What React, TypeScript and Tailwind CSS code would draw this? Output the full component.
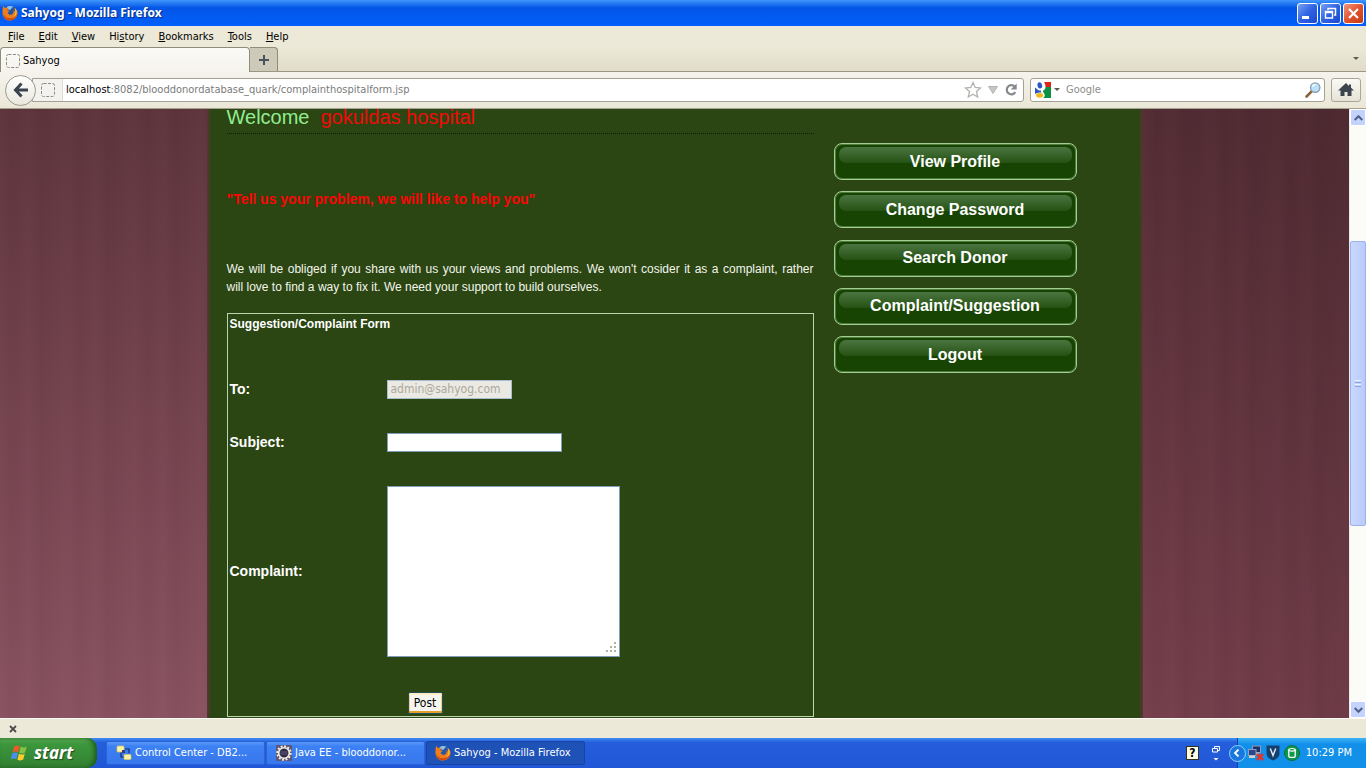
import type { ReactNode } from "react";

const UI = "font-['DejaVu_Sans_Condensed','DejaVu_Sans',sans-serif]";

function FirefoxIcon() {
  return (
    <svg viewBox="0 0 16 16" className="size-4 shrink-0" aria-hidden="true">
      <circle cx="8.2" cy="7.6" r="6.9" fill="#2456a4" />
      <path d="M4.500 2.500c2-2 5.500-1.800 7.200-.6-1.400 0-2.400 1.200-2.800 2.700-1.700.6-3.400-.1-4.400-2.100z" fill="#8ec0ea" />
      <path
        d="M1.400 .8C1.800 2 2.600 2.700 3.400 3c1.100-.4 2.200-.2 3 .4-.8.500-1 1.300-.8 2l1.900.3c0 .8-1.100 1.100-1.700 1.600-.1 1.900 1.700 3 3.600 2.400 1.900-.6 2.800-2.500 2-4.600 1 .5 1.400 1.400 1.500 2.200.5-1.700 0-3.600-1-4.700 2.400 1.200 3.800 3.400 3.600 6-.3 4-3.500 7-7.500 7S.7 12.400.5 8.400C.4 5.700.6 2.600 1.400.8z"
        fill="#ee7d1c"
      />
      <path d="M1.300 8.500c.8 2.800 3.300 4.800 6.700 4.800 3.400 0 6-2.200 6.900-5 .2 4-3.100 7-6.900 7-4.200 0-7-3-6.700-6.800z" fill="#cf4a10" />
      <path d="M12.900 3.200c1.700 1.600 2.300 4 1.300 6.200-.7 1.600-1.800 2.500-3 3 2-1.800 2.800-5.600 1.700-9.200z" fill="#fcc32c" />
    </svg>
  );
}

function BlankIcon() {
  return (
    <svg viewBox="0 0 16 16" className="size-4 shrink-0" aria-hidden="true">
      <rect x="1.500" y="1.500" width="13" height="13" rx="2" fill="none" stroke="#8a8a86" strokeDasharray="3 1.500" />
    </svg>
  );
}

function GoogleIcon() {
  return (
    <svg viewBox="0 0 16 16" className="size-4 shrink-0" aria-hidden="true">
      <rect width="16" height="16" fill="#fff" />
      <path d="M9 0h7v5h-5.500C10.600 3 10 1.300 9 0z" fill="#e2231a" />
      <path d="M16 5v11H8c1.800-1 2.400-3 1.200-4.600C8.300 10 7.500 9.600 8 8.800 9.700 8 10.600 6.600 10.500 5z" fill="#0b9144" />
      <path d="M0 5.500 2 7c1 1.200 2.500 1.700 4 1.500-.3.800 0 1.400.4 1.900-2.300 0-4.400.4-6.400 1.600z" fill="#2a56c6" />
      <ellipse cx="4.800" cy="3.400" rx="2.300" ry="3.200" transform="rotate(-12 4.800 3.400)" fill="#2a56c6" />
      <ellipse cx="4.600" cy="13.300" rx="3.500" ry="2.400" fill="#f4b81c" />
    </svg>
  );
}

function EclipseIcon() {
  return (
    <svg viewBox="0 0 16 16" className="size-4 shrink-0" aria-hidden="true">
      <rect width="16" height="16" rx="1" fill="#5b5674" />
      <circle cx="8" cy="8" r="6.700" fill="none" stroke="#f3efe6" strokeWidth="2" strokeDasharray="1.900 1.600" />
      <circle cx="8" cy="8" r="5.300" fill="#2f2b45" stroke="#f3efe6" strokeWidth="1.600" />
      <path d="M4.500 7h7M4.500 9h7" stroke="#6d6990" strokeWidth=".8" />
    </svg>
  );
}

function ControlCenterIcon() {
  return (
    <svg viewBox="0 0 16 16" className="size-4 shrink-0" aria-hidden="true">
      <path d="M5 6v6h4M9 4h4v4" fill="none" stroke="#1b2b6b" strokeWidth="1.200" />
      <rect x="1" y="1" width="7" height="6" rx="1" fill="#fbf3a5" stroke="#d9c65a" strokeWidth=".7" />
      <rect x="8" y="9.500" width="7" height="5" rx="1" fill="#fbf3a5" stroke="#d9c65a" strokeWidth=".7" />
      <rect x="6" y="5" width="3" height="3" fill="#3b3b7a" />
    </svg>
  );
}

function WindowsFlag() {
  return (
    <svg viewBox="0 0 20 18" className="h-[18px] w-5 shrink-0" aria-hidden="true">
      <path d="M4.200 2.600C6 1.200 8 1.300 9.700 2.300L8.200 8.200C6.500 7.200 4.400 7.200 2.600 8.400z" fill="#ee5a2b" />
      <path d="M10.700 2.800c1.900 1 4 1 6-.2l-1.600 6c-1.900 1.100-4 1.100-5.900.2z" fill="#85c440" />
      <path d="M2.300 9.500C4 8.300 6.200 8.300 7.900 9.300L6.400 15C4.700 14.200 2.600 14.200.8 15.300z" fill="#4a8ff0" />
      <path d="M8.900 9.800c1.900 1 4 1 5.900-.1l-1.600 5.900c-1.800 1.100-3.900 1-5.800.1z" fill="#fccd2d" />
    </svg>
  );
}

function TitleButton({ label, close, children }: { label: string; close?: boolean; children: ReactNode }) {
  return (
    <button
      aria-label={label}
      className={
        close
          ? "flex size-[21px] items-center justify-center rounded-[3px] border border-white bg-linear-to-br from-[#f0957a] via-[#e0532c] to-[#c63a12]"
          : "flex size-[21px] items-center justify-center rounded-[3px] border border-white bg-linear-to-br from-[#7aa0f0] via-[#2f62e4] to-[#1c48d0]"
      }
    >
      <svg viewBox="0 0 19 19" className="size-[19px]" fill="none" stroke="#fff" aria-hidden="true">
        {children}
      </svg>
    </button>
  );
}

function TitleBar() {
  return (
    <header className="flex h-[26px] shrink-0 items-center bg-linear-to-b from-[#3f96fb] via-[#0355e6] via-30% to-[#0260fc] pr-0.5 pl-0.5">
      <FirefoxIcon />
      <h1 className="ml-[3px] flex-1 font-['Noto_Sans',sans-serif] text-[12px] font-bold text-white [text-shadow:1px_1px_1px_#0a2a80]">
        Sahyog - Mozilla Firefox
      </h1>
      <div className="flex gap-0.5">
        <TitleButton label="Minimize">
          <path d="M4 13.500h7" strokeWidth="3" />
        </TitleButton>
        <TitleButton label="Restore">
          <path d="M7 6V4.500h7.500V11H13" strokeWidth="1.500" />
          <path d="M4.500 7.500h7v6.500h-7zM4.500 8.500h7" strokeWidth="1.400" />
        </TitleButton>
        <TitleButton label="Close" close>
          <path d="m5 5 9 9M14 5l-9 9" strokeWidth="2.200" />
        </TitleButton>
      </div>
    </header>
  );
}

const menus = [
  ["", "F", "ile"],
  ["", "E", "dit"],
  ["", "V", "iew"],
  ["Hi", "s", "tory"],
  ["", "B", "ookmarks"],
  ["", "T", "ools"],
  ["", "H", "elp"],
];

function MenuBar() {
  return (
    <nav className="flex h-[21px] shrink-0 items-center gap-3.5 bg-[#ece9d8] pl-2" aria-label="Menu bar">
      {menus.map(([before, key, after]) => (
        <button key={key + after} className="leading-[14px]">
          {before}
          <span className="underline">{key}</span>
          {after}
        </button>
      ))}
    </nav>
  );
}

function TabStrip() {
  return (
    <div className="flex h-[25px] shrink-0 items-stretch border-b border-[#9a9784] bg-linear-to-b from-[#ece9d8] to-[#e0dcc9]">
      <div className="-mb-px flex w-[250px] items-center gap-[2px] rounded-t-[4px] border border-b-0 border-[#8f8c7b] bg-linear-to-b from-[#fbfaf6] to-[#f5f3ec] pt-[2px] pl-1">
        <BlankIcon />
        <span>Sahyog</span>
      </div>
      <button
        aria-label="New tab"
        className="flex w-7 items-center justify-center rounded-tr-[4px] border border-b-0 border-l-0 border-[#8f8c7b] bg-[#cdcab9]"
      >
        <svg viewBox="0 0 10 10" className="size-[10px]" stroke="#46525c" strokeWidth="2" aria-hidden="true">
          <path d="M5 0v10M0 5h10" />
        </svg>
      </button>
      <div className="flex flex-1 items-center justify-end pr-[7px]">
        <button aria-label="List all tabs">
          <svg viewBox="0 0 6 4" className="h-1 w-1.5" fill="#5c5a4f" aria-hidden="true">
            <path d="M0 0h6L3 3z" />
          </svg>
        </button>
      </div>
    </div>
  );
}

function NavBar() {
  return (
    <div className="flex h-[37px] shrink-0 items-center border-b border-[#a5a28f] bg-linear-to-b from-[#f5f3ec] to-[#ebe7d7] pr-[5px] pl-[5px]">
      <button
        aria-label="Back"
        className="z-10 flex size-[31px] shrink-0 items-center justify-center rounded-full border border-[#9d9b8e] bg-linear-to-b from-white to-[#e9e7dd]"
      >
        <svg viewBox="0 0 16 16" className="size-4" fill="none" stroke="#39444d" strokeWidth="3" aria-hidden="true">
          <path d="M8.500 1.500 2.500 8l6 6.500M3 8h12" />
        </svg>
      </button>
      <div className="-ml-1 flex h-6 min-w-0 flex-1 items-center rounded-r-[3px] border border-[#a3a192] bg-white">
        <div className="flex h-full w-[30px] shrink-0 items-center justify-end border-r border-[#dcdad2] bg-[#f3f2ee] pr-[6px]">
          <BlankIcon />
        </div>
        <div className="grid min-w-0 flex-1 items-center">
          <input
            aria-label="Address"
            defaultValue="localhost:8082/blooddonordatabase_quark/complainthospitalform.jsp"
            className="col-start-1 row-start-1 w-full bg-transparent pl-[3px] text-transparent outline-none"
          />
          <span aria-hidden="true" className="pointer-events-none col-start-1 row-start-1 truncate pl-[3px] text-[#7b7b7b]">
            <span className="text-black">localhost</span>:8082/blooddonordatabase_quark/complainthospitalform.jsp
          </span>
        </div>
        <div className="flex items-center gap-1.5 pr-[5px]">
          <button aria-label="Bookmark this page">
            <svg viewBox="0 0 18 18" className="size-[18px]" fill="#fff" stroke="#b1b1ad" strokeWidth="1.300" aria-hidden="true">
              <path d="m9 1.500 2.200 5 5.300.5-4 3.600 1.200 5.400L9 13.200 4.300 16l1.200-5.400-4-3.600 5.300-.5z" />
            </svg>
          </button>
          <button aria-label="History">
            <svg viewBox="0 0 10 8" className="h-2 w-[10px]" fill="#c6c6c3" stroke="#b4b4b0" aria-hidden="true">
              <path d="M.5.500h9L5 7.500z" />
            </svg>
          </button>
          <button aria-label="Reload">
            <svg viewBox="0 0 14 14" className="size-[14px]" fill="none" stroke="#85898b" strokeWidth="2.200" aria-hidden="true">
              <path d="M10.700 3.600A4.600 4.600 0 1 0 11.300 9.200" />
              <path d="M12.700.5v6H6.700z" fill="#85898b" stroke="none" />
            </svg>
          </button>
        </div>
      </div>
      <div className="ml-[6px] flex h-6 w-[295px] shrink-0 items-center rounded-[3px] border border-[#a3a192] bg-white pr-[3px] pl-1">
        <GoogleIcon />
        <svg viewBox="0 0 6 4" className="ml-[3px] h-1 w-1.5" fill="#5c5a4f" aria-hidden="true">
          <path d="M0 0h6L3 3z" />
        </svg>
        <input aria-label="Search" placeholder="Google" className="ml-1.5 min-w-0 flex-1 outline-none placeholder:text-[#8e8e8a]" />
        <button aria-label="Run search">
          <svg viewBox="0 0 16 16" className="size-4" aria-hidden="true">
            <path d="m6.600 9.400-5 5.100" stroke="#8d6136" strokeWidth="2.600" strokeLinecap="round" />
            <circle cx="10.200" cy="5.600" r="4.700" fill="#b9e1fa" stroke="#8a9cae" strokeWidth="1.300" />
            <path d="M7.600 5a2.800 2.800 0 0 1 3-2.300" fill="none" stroke="#fff" strokeWidth="1.200" />
          </svg>
        </button>
      </div>
      <button
        aria-label="Home"
        className="ml-[6px] flex h-6 w-[30px] shrink-0 items-center justify-center rounded-[3px] border border-[#a8a698] bg-linear-to-b from-[#faf9f5] to-[#e6e3d6]"
      >
        <svg viewBox="0 0 16 16" className="size-4" fill="#3c454d" aria-hidden="true">
          <path d="M8 1 0 8.500h2.500V14h4v-4h3v4h4V8.500H16L13 5.700V2.500h-2v1.400z" />
        </svg>
      </button>
    </div>
  );
}

const actions = ["View Profile", "Change Password", "Search Donor", "Complaint/Suggestion", "Logout"];

function SideMenu() {
  return (
    <nav className="flex h-[230px] w-[243px] flex-col justify-between" aria-label="Hospital menu">
      {actions.map((name) => (
        <a
          key={name}
          href="#"
          className="relative flex h-[37px] items-center justify-center rounded-[8px] border border-[#a3cd92] bg-[#174402] text-[16px] font-bold text-white shadow-[inset_0_0_0_1px_#4d7c3a]"
        >
          <span className="absolute inset-x-[4px] top-[3px] h-[16px] rounded-[7px] bg-linear-to-b from-[#4b7540] to-[#255212]" />
          <span className="relative">{name}</span>
        </a>
      ))}
    </nav>
  );
}

function ComplaintForm() {
  return (
    <form
      className="mt-[17px] border border-[#bcd3ab] pb-[2px] pl-[2px] text-[14px] leading-[19px] font-bold text-white"
      onSubmit={(e) => e.preventDefault()}
    >
      <h3 className="text-[12px] leading-[20px]">Suggestion/Complaint Form</h3>
      <div className="mt-[46px] grid grid-cols-[157px_1fr] items-center gap-y-[34px]">
        <label htmlFor="to">To:</label>
        <input
          id="to"
          disabled
          defaultValue="admin@sahyog.com"
          className="h-[19px] w-[125px] border border-[#a9bcc9] bg-[#ebe9e3] px-[3px] font-['DejaVu_Sans_Condensed',sans-serif] text-[12px] font-normal text-[#aca899]"
        />
        <label htmlFor="subject">Subject:</label>
        <input id="subject" className="h-[19px] w-[175px] border border-[#7f9db9] bg-white px-[3px] text-[12px] font-normal text-black" />
        <label htmlFor="complaint">Complaint:</label>
        <div className="relative w-[233px]">
          <textarea
            id="complaint"
            className="block h-[171px] w-full resize-none border border-[#7f9db9] bg-white px-[3px] text-[12px] font-normal text-black"
          />
          <svg viewBox="0 0 12 12" className="absolute right-[3px] bottom-[3px] size-3" fill="#b5b29f" aria-hidden="true">
            <path d="M9 0h2v2H9zM9 4h2v2H9zM5 4h2v2H5zM9 8h2v2H9zM5 8h2v2H5zM1 8h2v2H1z" />
          </svg>
        </div>
      </div>
      <button className="mt-[35px] ml-[178px] flex h-[22px] w-[35px] items-center justify-center rounded-[2px] border border-[#1f4e5c] bg-[#f7f5f0] font-['DejaVu_Sans_Condensed',sans-serif] text-[12px] font-normal text-black shadow-[inset_0_-2px_0_#e5a02c,inset_0_2px_0_#fdecc6,inset_1px_0_0_#f8cd80,inset_-1px_0_0_#f8cd80]">
        Post
      </button>
    </form>
  );
}

function Backdrop() {
  return (
    <div className="col-start-1 row-start-1 grid grid-cols-2" aria-hidden="true">
      <div className="bg-[repeating-linear-gradient(90deg,#ffffff03_0px,#00000005_13px,#ffffff03_29px,#00000007_41px,#ffffff03_67px),linear-gradient(180deg,#5e343c,#8a5261)]" />
      <div className="bg-[repeating-linear-gradient(90deg,#ffffff03_0px,#00000005_13px,#ffffff03_29px,#00000007_41px,#ffffff03_67px),linear-gradient(90deg,#00000000_70%,#00000014),linear-gradient(180deg,#532c34,#763f4c)]" />
    </div>
  );
}

function Scrollbar() {
  return (
    <div className="flex w-[17px] shrink-0 flex-col border-l border-[#eeede5] bg-[#fbfbf8]" aria-hidden="true">
      <div className="flex h-[17px] items-center justify-center rounded-[2px] border border-white bg-[#c3d3fd]">
        <svg viewBox="0 0 9 6" className="h-1.5 w-[9px]" fill="none" stroke="#4d6185" strokeWidth="2">
          <path d="m.7 5 3.800-3.800L8.300 5" />
        </svg>
      </div>
      <div className="flex flex-1 flex-col">
        <div className="flex-[115]" />
        <div className="flex flex-[284] flex-col items-center justify-center gap-px rounded-[2px] border border-[#9bb1ea] bg-linear-to-r from-[#c9d8fe] to-[#bacbfa]">
          <div className="h-px w-1.5 bg-[#eef4fe]" />
          <div className="h-px w-1.5 bg-[#8ca6e6]" />
          <div className="h-px w-1.5 bg-[#eef4fe]" />
          <div className="h-px w-1.5 bg-[#8ca6e6]" />
        </div>
        <div className="flex-[176]" />
      </div>
      <div className="flex h-[17px] items-center justify-center rounded-[2px] border border-white bg-[#c3d3fd]">
        <svg viewBox="0 0 9 6" className="h-1.5 w-[9px]" fill="none" stroke="#4d6185" strokeWidth="2">
          <path d="m.7 1 3.800 3.800L8.300 1" />
        </svg>
      </div>
    </div>
  );
}

function Page() {
  return (
    <div className="flex min-h-0 flex-1">
      <div className="grid min-w-0 flex-1 overflow-hidden font-['Liberation_Sans',Arial,sans-serif] [grid-template-rows:minmax(0,1fr)]">
        <Backdrop />
        <main className="col-start-1 row-start-1 mx-auto flex w-[936px] max-w-full gap-5 border-x-4 border-[#4a3a26] bg-[#2b4513] pl-4 [border-image:linear-gradient(90deg,#5a3438,#2b4513_4px,#2b4513_calc(100%-4px),#5a3438)_4]">
          <section className="w-[587px] shrink-0">
            <h2 className="flex h-[25px] items-center gap-[11px] border-b border-dotted border-[#0f1d04] pb-[8px] text-[20px] leading-4 text-[#90ee90]">
              <span>Welcome</span>
              <span className="text-[#f00a0a]">gokuldas hospital</span>
            </h2>
            <p className="mt-[56px] text-[14px] leading-[18px] font-bold text-[#fa0505]">
              "Tell us your problem, we will like to help you"
            </p>
            <p className="mt-[52px] text-[12px] leading-[18px] text-[#f2f5ec]">
              <span className="block [text-align-last:justify]">
                We will be obliged if you share with us your views and problems. We won't cosider it as a complaint, rather
              </span>{" "}
              will love to find a way to fix it. We need your support to build ourselves.
            </p>
            <ComplaintForm />
          </section>
          <aside className="mt-[34px]">
            <SideMenu />
          </aside>
        </main>
      </div>
      <Scrollbar />
    </div>
  );
}

function Task({ icon, label, active }: { icon: ReactNode; label: string; active?: boolean }) {
  return (
    <button
      className={
        active
          ? "flex h-6 w-[159px] items-center gap-[3px] rounded-[2px] border border-[#1844a5] bg-[#1e52b7] pl-2 text-white"
          : "flex h-6 w-[159px] items-center gap-[3px] rounded-[2px] border border-[#2a62dc] bg-linear-to-b from-[#5a98fb] via-[#3c81f3] via-20% to-[#3877ec] pl-[9px] text-white"
      }
    >
      {icon}
      <span>{label}</span>
    </button>
  );
}

function Taskbar() {
  return (
    <footer className="flex h-[30px] shrink-0 items-stretch bg-linear-to-b from-[#3f8cf3] via-[#245edb] via-15% to-[#2157d7]">
      <button className="flex w-[97px] items-center gap-[4px] rounded-r-[10px] bg-linear-to-b from-[#5eac56] via-[#3c973c] via-20% to-[#327f32] pl-[10px] shadow-[inset_-3px_0_4px_#1f5f1f]">
        <WindowsFlag />
        <span className="font-['Noto_Sans',sans-serif] text-[17px] leading-5 font-bold text-white italic [text-shadow:1px_1px_1px_#1d4a1d]">
          start
        </span>
      </button>
      <div className="ml-[9px] flex flex-1 items-center gap-px">
        <Task icon={<ControlCenterIcon />} label="Control Center - DB2..." />
        <Task icon={<EclipseIcon />} label="Java EE - blooddonor..." />
        <Task icon={<FirefoxIcon />} label="Sahyog - Mozilla Firefox" active />
      </div>
      <div className="flex items-center gap-[13px] pr-[17px]">
        <span className="flex h-[14px] w-[13px] items-center justify-center border border-[#33301c] bg-[#ffffe6] text-[12px] font-bold">?</span>
        <svg viewBox="0 0 8 16" className="h-4 w-2" fill="none" stroke="#fff" aria-hidden="true">
          <path d="M2.500 3V1.500h5v4H6M.500 3.500h5v3.500h-5z" />
          <path d="M1.500 13h5L4 15.500z" fill="#fff" stroke="none" />
        </svg>
      </div>
      <div className="flex items-center border-l border-[#1042af] bg-linear-to-b from-[#3ab4f6] via-[#1290e9] via-20% to-[#1190ea] pr-[14px] text-white">
        <button
          aria-label="Show hidden icons"
          className="-ml-[9px] flex size-[17px] items-center justify-center rounded-full border border-[#8fd0fa] bg-[#1b77e0]"
        >
          <svg viewBox="0 0 8 8" className="size-2" fill="none" stroke="#fff" strokeWidth="1.800" aria-hidden="true">
            <path d="M5.500.500 2 4l3.500 3.500" />
          </svg>
        </button>
        <svg viewBox="0 0 18 18" className="ml-px size-[18px]" aria-hidden="true">
          <rect x="5.500" y="2" width="8" height="6.500" fill="#1d3266" stroke="#8d9cc0" />
          <path d="M8 8.500h4v2H8z" fill="#b9bfca" />
          <rect x="1.500" y="5.500" width="7.500" height="6" fill="#2d4687" stroke="#8d9cc0" />
          <path d="M2 11.500h6v2.500H2z" fill="#d5d0c4" />
          <path d="m10 10 6 6M16 10l-6 6" stroke="#e3342a" strokeWidth="2.600" />
        </svg>
        <svg viewBox="0 0 14 16" className="ml-px h-4 w-[14px]" aria-hidden="true">
          <path d="M.5.500h13V8c0 4-3 6-6.500 7.500C3.500 14 .5 12 .5 8z" fill="#153f6c" />
          <path d="m4.300 3.500 2.700 7 2.700-7" fill="none" stroke="#e7eef5" strokeWidth="1.400" />
        </svg>
        <svg viewBox="0 0 16 16" className="ml-1 size-4" aria-hidden="true">
          <circle cx="8" cy="8" r="7.500" fill="#0d9a4e" stroke="#0a6d3a" />
          <path d="M4.800 4.800v6.400c0 1.600 6.400 1.600 6.400 0V4.800" fill="none" stroke="#fff" strokeWidth="1.300" />
          <ellipse cx="8" cy="4.800" rx="3.200" ry="1.300" fill="none" stroke="#fff" strokeWidth="1.200" />
        </svg>
        <time className="ml-[6px] whitespace-nowrap">10:29 PM</time>
      </div>
    </footer>
  );
}

export default function App() {
  return (
    <div className={`flex h-screen flex-col overflow-hidden bg-[#ece9d8] text-[11px] text-black ${UI}`}>
      <TitleBar />
      <MenuBar />
      <TabStrip />
      <NavBar />
      <Page />
      <div className="flex h-5 shrink-0 items-center border-t border-[#fbfaf5] bg-[#ece9d8] pl-[9px]">
        <button aria-label="Close bar">
          <svg viewBox="0 0 8 8" className="size-2" stroke="#4d4c47" strokeWidth="1.800" aria-hidden="true">
            <path d="m1 1 6 6M7 1 1 7" />
          </svg>
        </button>
      </div>
      <Taskbar />
    </div>
  );
}
